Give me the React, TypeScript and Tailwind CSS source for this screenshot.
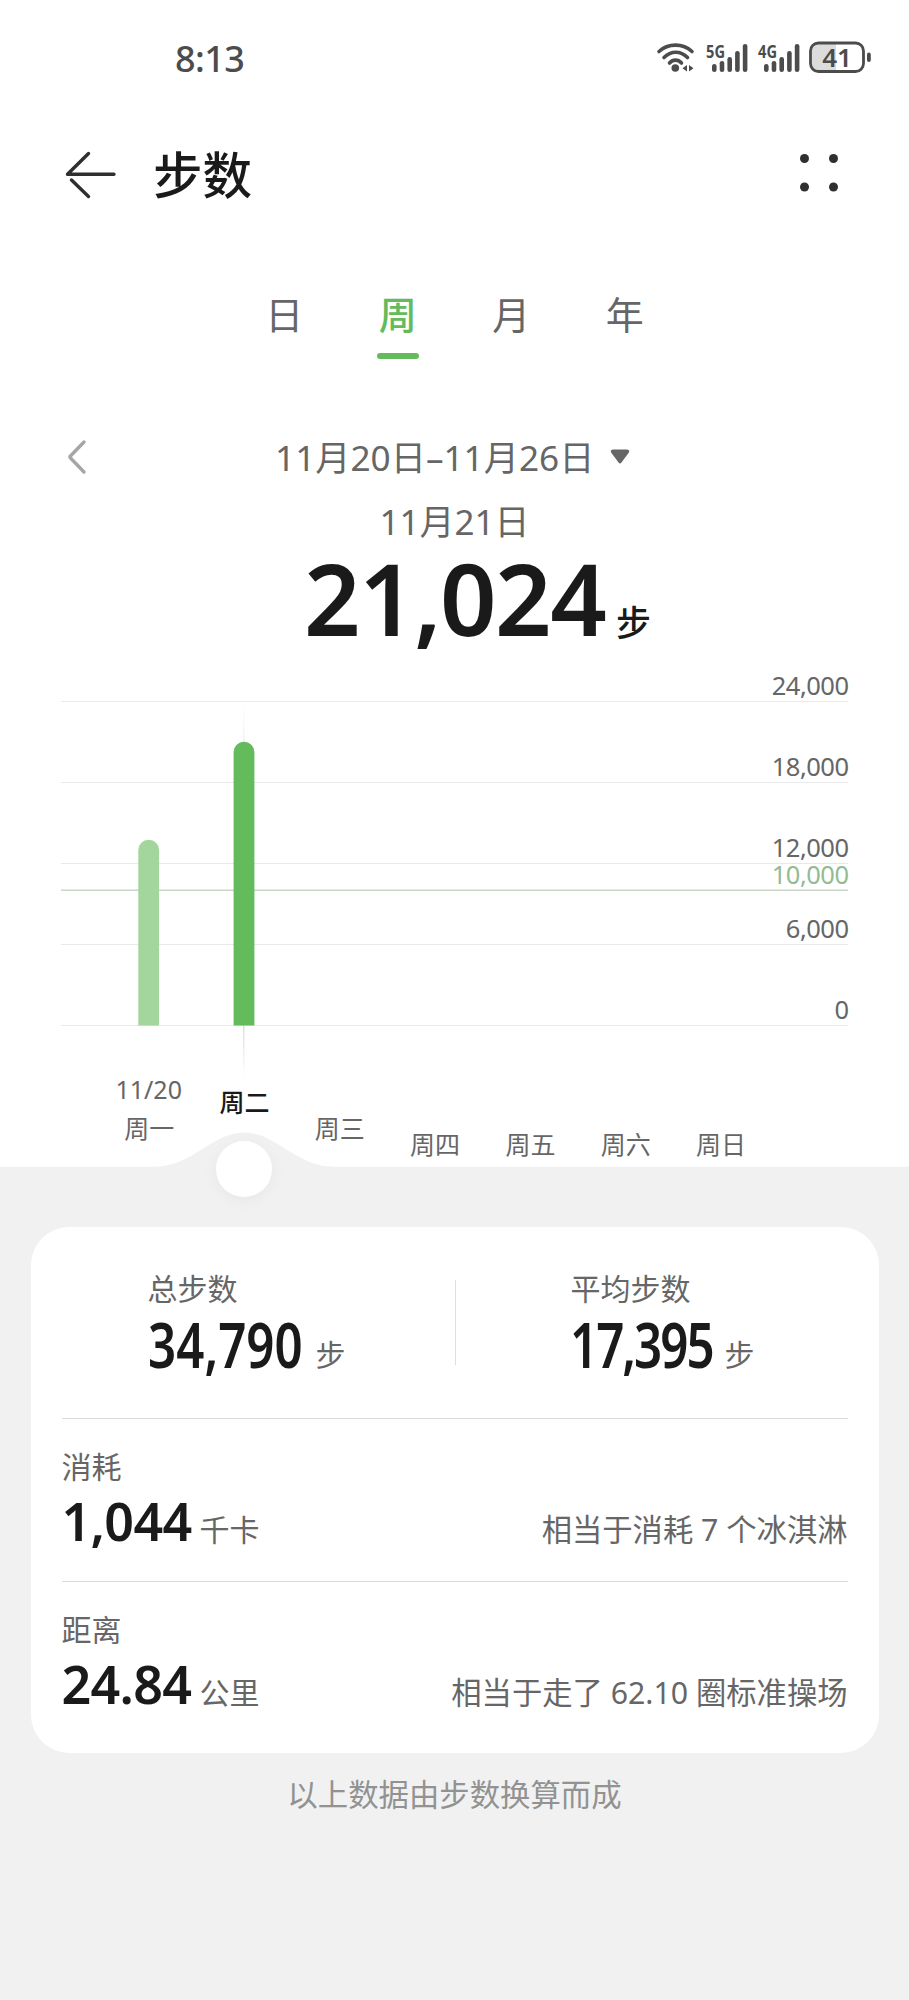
const tabs = ["日", "周", "月", "年"];

const days = [
  { label: "周一", date: "11/20", steps: 13766, y: 488 },
  { label: "周二", steps: 21024, y: 461.5, active: true },
  { label: "周三", steps: 0, y: 488 },
  { label: "周四", steps: 0, y: 504 },
  { label: "周五", steps: 0, y: 504 },
  { label: "周六", steps: 0, y: 504 },
  { label: "周日", steps: 0, y: 504 },
];

const ticks = [24000, 18000, 12000, 6000, 0];
const goal = 10000;

const yOf = (value: number) => 375.5 - value * 0.0135;
const xOf = (index: number) => 148.7 + index * 95.3;

function Signal({ x, name }: { x: number; name: string }) {
  const tops = [24, 21, 17, 11, 4];
  return (
    <g transform={`translate(${x} 0)`}>
      <text x="0" y="17.500" fontSize="18" fontWeight="700" textLength="19" lengthAdjust="spacingAndGlyphs" fill="#4c4c4c">
        {name}
      </text>
      {tops.map((top, i) => (
        <rect key={top} x={6 + i * 7.7} y={top} width="4.6" height={32 - top} rx="2.3" fill="#4c4c4c" />
      ))}
    </g>
  );
}

function StatusBar() {
  return (
    <div className="flex h-[116px] items-center justify-between pr-[37px] pl-[175px]">
      <span className="mt-0.5 text-[36px] font-medium leading-[40px] tracking-[-0.6px] text-[#4c4c4c]">8:13</span>
      <svg width="216" height="36" viewBox="0 0 216 36" fill="none">
        {/* Wifi */}
        <g stroke="#4c4c4c" strokeWidth="3.6" strokeLinecap="round">
          <path d="M3 11.500C12 3 27 3 36 11.500" />
          <path d="M8 17.500C15 10.500 24.500 10.500 31.500 17.500" />
          <path d="M13.500 23C17 19.200 22 19.200 25.500 23" />
        </g>
        <circle cx="19.300" cy="28" r="3.8" fill="#4c4c4c" />
        <path d="M31 25v6.400l-4.500-3.200zM33 25v6.400l4.500-3.200z" fill="#4c4c4c" />

        <Signal x={50} name="5G" />
        <Signal x={102} name="4G" />

        {/* Battery */}
        <path d="M163 4h17v28h-17a7 7 0 0 1-7-7V11a7 7 0 0 1 7-7z" fill="#dcdcdc" />
        <rect x="154.500" y="3" width="53" height="28.500" rx="8" stroke="#4c4c4c" strokeWidth="2.800" />
        <rect x="211" y="12.500" width="3.800" height="9.500" rx="1.900" fill="#4c4c4c" />
        <text x="181" y="26.500" fontSize="26" fontWeight="600" textAnchor="middle" fill="#4c4c4c">
          41
        </text>
      </svg>
    </div>
  );
}

function Header() {
  return (
    <header className="flex h-[118px] items-center pr-[69px] pl-[64px]">
      <svg width="52" height="48" viewBox="0 0 52 48" fill="none" stroke="#2f2f2f" strokeWidth="3.400" strokeLinecap="round" strokeLinejoin="round">
        <path d="M24.500 2.500L3.500 23.300H50" />
        <path d="M7.500 29L24.500 45.500" />
      </svg>
      <h1 className="ml-[37px] flex-1 text-[49.500px] font-medium leading-[60px] text-[#1a1a1a]">步数</h1>
      <svg className="-mt-1" width="42" height="42" viewBox="0 0 42 42" fill="#2f2f2f">
        <circle cx="6.500" cy="6.500" r="4.500" />
        <circle cx="35.500" cy="6.500" r="4.500" />
        <circle cx="6.500" cy="35" r="4.500" />
        <circle cx="35.500" cy="35" r="4.500" />
      </svg>
    </header>
  );
}

function StepsChart() {
  return (
    <svg width="909" height="577" viewBox="0 0 909 577" className="block">
      <defs>
        <linearGradient id="cursor" x1="0" y1="0" x2="0" y2="1">
          <stop offset="0" stopColor="#d0d0d0" stopOpacity="0" />
          <stop offset="0.300" stopColor="#d0d0d0" />
          <stop offset="0.800" stopColor="#d0d0d0" />
          <stop offset="1" stopColor="#d0d0d0" stopOpacity="0" />
        </linearGradient>
        <filter id="knob" x="-50%" y="-50%" width="200%" height="200%">
          <feDropShadow dx="0" dy="3" stdDeviation="7" floodColor="#000" floodOpacity="0.040" />
        </filter>
      </defs>

      {ticks.map((tick) => (
        <g key={tick}>
          <rect x="61" y={yOf(tick) - 0.5} width="787" height="1" fill="#e9e9e9" />
          <text x="848.500" y={yOf(tick) - 6.5} fontSize="25.500" letterSpacing="-0.500" textAnchor="end" fill="#666">
            {tick.toLocaleString("en-US")}
          </text>
        </g>
      ))}

      {/* Daily goal */}
      <rect x="61" y={yOf(goal) - 1} width="787" height="1.500" fill="#c9d6c7" />
      <text x="848.500" y={yOf(goal) - 6.5} fontSize="25.500" letterSpacing="-0.500" textAnchor="end" fill="#94bb92">
        {goal.toLocaleString("en-US")}
      </text>

      <rect x="243" y="56" width="1.500" height="372" fill="url(#cursor)" />

      {days.map((day, i) => {
        const x = xOf(i);
        const top = yOf(day.steps);
        return (
          <g key={day.label} textAnchor="middle" fontSize="25">
            {day.steps > 0 && (
              <path
                d={`M${x - 10.4} 375.500V${top + 10.4}a10.400 10.400 0 0 1 20.800 0V375.500z`}
                fill={day.active ? "#64bb5c" : "#a2d69d"}
              />
            )}
            {day.date && (
              <text x={x} y="448.500" fill="#666">
                {day.date}
              </text>
            )}
            <text x={x + 0.5} y={day.y} fontWeight={day.active ? 500 : 400} fill={day.active ? "#1a1a1a" : "#666"}>
              {day.label}
            </text>
          </g>
        );
      })}

      <path
        d="M0 577V516.700H155C192 516.700 212 482.500 244 482.500C276 482.500 296 516.700 333 516.700H909V577z"
        fill="#f1f1f1"
      />
      <circle cx="244" cy="519" r="28" fill="#fff" filter="url(#knob)" />
    </svg>
  );
}

function Metric({ label, value, unit, note }: { label: string; value: string; unit: string; note: string }) {
  return (
    <div className="h-[163px] border-t border-[#d9d9d9] pt-[28px]">
      <p className="text-[30px] leading-[40px]">{label}</p>
      <div className="flex items-baseline leading-[68px]">
        <span className="w-[138px] text-[52px] font-[560] tracking-[-0.700px] text-[#1a1a1a]">{value}</span>
        <span className="text-[30px]">{unit}</span>
        <span className="ml-auto text-[30.300px]">{note}</span>
      </div>
    </div>
  );
}

export default function App() {
  return (
    <div className="h-[2000px] w-[909px] overflow-hidden bg-[#f1f1f1] font-['Noto_Sans','Noto_Sans_CJK_SC',sans-serif] text-[#666]">
      <div className="bg-white">
        <StatusBar />
        <Header />

        {/* Period tabs */}
        <nav className="flex justify-center pt-[58px]">
          {tabs.map((tab) => (
            <div key={tab} className="flex w-[113.500px] flex-col items-center">
              <span
                className={
                  tab === "周"
                    ? "text-[38px] font-medium leading-[44px] text-[#64bb5c]"
                    : "text-[38px] leading-[44px]"
                }
              >
                {tab}
              </span>
              {tab === "周" && <span className="mt-[17px] h-[6px] w-[42px] rounded-full bg-[#64bb5c]" />}
            </div>
          ))}
        </nav>

        {/* Date range */}
        <div className="mt-[73px] flex h-[50px] items-center pl-[66px]">
          <svg width="22" height="36" viewBox="0 0 22 36" fill="none" stroke="#a6a6a6" strokeWidth="3.400" strokeLinecap="round" strokeLinejoin="round">
            <path d="M18 3L4.500 17Q3.500 18 4.500 19L18 33" />
          </svg>
          <span className="ml-[187px] w-[318px] whitespace-nowrap text-[35.200px] leading-[50px]">
            11月20日–11月26日
          </span>
          <svg className="ml-[17px]" width="20" height="16" viewBox="0 0 20 16" fill="#666">
            <path d="M3 0.500H17Q20.500 1 18.500 4L11.500 13.500Q10 15.500 8.500 13.500L1.500 4Q-0.500 1 3 0.500z" />
          </svg>
        </div>

        <p className="mt-[18px] text-center text-[35px] leading-[44px]">11月21日</p>
        <div className="flex h-[106px] items-baseline pl-[304px] text-[#1a1a1a]">
          <span className="mt-px w-[312px] text-[99px] font-[560] leading-[106px] tracking-[-1.600px]">21,024</span>
          <span className="text-[35px] font-medium">步</span>
        </div>

        <StepsChart />
      </div>

      <main className="mx-[30.500px] h-[526px] rounded-[38px] bg-white px-[31px]">
        <div className="flex h-[191px]">
          <div className="w-[393px] pt-[42px] pl-[86px]">
            <p className="text-[30px] leading-[40px]">总步数</p>
            <div className="flex items-baseline">
              <div className="w-[168px]">
                <span className="inline-block origin-left scale-x-[0.77] text-[64px] font-semibold leading-[70px] text-[#1a1a1a]">
                  34,790
                </span>
              </div>
              <span className="-translate-y-0.5 text-[30px]">步</span>
            </div>
          </div>
          <div className="mt-[53px] h-[85px] w-px bg-[#dedede]" />
          <div className="pt-[42px] pl-[115px]">
            <p className="text-[30px] leading-[40px]">平均步数</p>
            <div className="flex items-baseline">
              <div className="w-[154px]">
                <span className="-ml-px inline-block origin-left scale-x-[0.77] text-[64px] font-semibold leading-[70px] tracking-[-2.600px] text-[#1a1a1a]">
                  17,395
                </span>
              </div>
              <span className="-translate-y-0.5 text-[30px]">步</span>
            </div>
          </div>
        </div>
        <Metric label="消耗" value="1,044" unit="千卡" note="相当于消耗 7 个冰淇淋" />
        <Metric label="距离" value="24.84" unit="公里" note="相当于走了 62.10 圈标准操场" />
      </main>

      <p className="mt-[22px] text-center text-[30.400px] leading-[40px] text-[#929292]">以上数据由步数换算而成</p>
    </div>
  );
}
